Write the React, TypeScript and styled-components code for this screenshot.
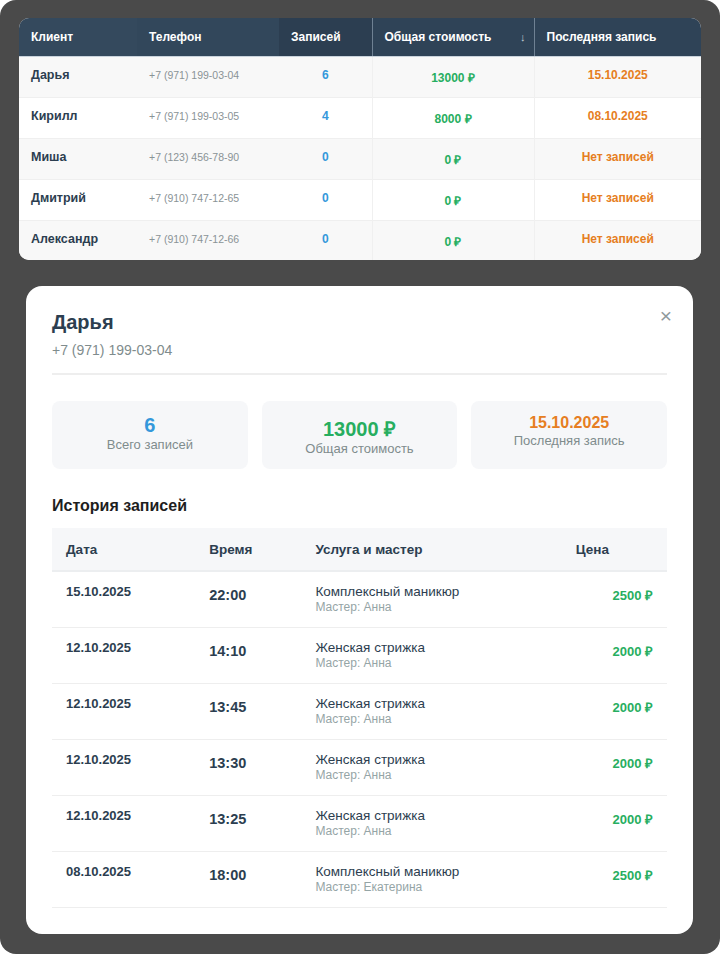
import React from "react";
import styled, { createGlobalStyle } from "styled-components";

const Global = createGlobalStyle`
  html, body { margin: 0; padding: 0; background: #ffffff; }
  body { font-family: "Liberation Sans", Arial, sans-serif; }
  * { box-sizing: border-box; }
`;

const Page = styled.div`
  width: 720px;
  height: 954px;
  background: #4a4a4a;
  border-radius: 16px;
  padding: 18px 19px 20px 19px;
  display: flex;
  flex-direction: column;
  overflow: hidden;
`;

const TableCard = styled.div`
  width: 682px;
  background: #ffffff;
  border-radius: 10px;
  overflow: hidden;
`;

const ClientTable = styled.table`
  width: 100%;
  border-collapse: collapse;
  table-layout: fixed;
`;

const HeadCell = styled.th<{ $bg: string; $w: number; $sep?: boolean }>`
  width: ${(p) => p.$w}px;
  height: 38px;
  padding: 0 12px;
  background: ${(p) => p.$bg};
  color: #ffffff;
  font-size: 12px;
  font-weight: 700;
  text-align: left;
  position: relative;
  border-bottom: 1px solid #c9d3dc;
  ${(p) => (p.$sep ? "border-left: 1px solid #6f8193; border-right: 1px solid #6f8193;" : "")}
`;

const SortArrow = styled.span`
  position: absolute;
  right: 8px;
  top: 50%;
  transform: translateY(-50%);
  font-size: 11px;
  font-weight: 400;
  color: #c5ced6;
`;

const BodyRow = styled.tr<{ $alt: boolean }>`
  background: ${(p) => (p.$alt ? "#f8f8f8" : "#ffffff")};
  border-bottom: 1px solid #efefef;
  &:last-child { border-bottom-color: transparent; }
`;

const Cell = styled.td<{ $align?: string; $pt?: number; $sep?: boolean }>`
  height: 41px;
  padding: ${(p) => p.$pt ?? 10}px 12px 0 12px;
  vertical-align: top;
  text-align: ${(p) => p.$align ?? "left"};
  line-height: 14px;
  ${(p) => (p.$sep ? "border-left: 1px solid #f0f0f0; border-right: 1px solid #f0f0f0;" : "")}
`;

const Name = styled.span`
  font-size: 12.5px;
  font-weight: 700;
  color: #2c3e50;
`;

const Phone = styled.span`
  font-size: 10.5px;
  color: #8a9396;
`;

const Count = styled.span`
  font-size: 12px;
  font-weight: 700;
  color: #3498db;
`;

const Money = styled.span`
  font-size: 12px;
  font-weight: 700;
  color: #27ae60;
`;

const Last = styled.span`
  font-size: 12px;
  font-weight: 700;
  color: #e67e22;
`;

const Modal = styled.div`
  margin: 26px 8px 0 7px;
  width: 667px;
  background: #ffffff;
  border-radius: 16px;
  padding: 24px 26px 26px 26px;
  position: relative;
`;

const CloseBtn = styled.button`
  position: absolute;
  top: 17px;
  right: 14px;
  width: 26px;
  height: 26px;
  border: none;
  background: transparent;
  color: #8f999c;
  font-size: 21px;
  line-height: 26px;
  padding: 0;
  font-family: "Liberation Sans", Arial, sans-serif;
`;

const ModalHeader = styled.div`
  display: flex;
  flex-direction: column;
  padding-bottom: 14px;
  border-bottom: 2px solid #eeeeee;
`;

const Title = styled.h2`
  margin: 0;
  font-size: 20px;
  line-height: 24px;
  font-weight: 700;
  color: #2c3e50;
`;

const SubPhone = styled.div`
  margin-top: 7px;
  font-size: 14px;
  line-height: 18px;
  color: #7f8c8d;
`;

const Stats = styled.div`
  margin-top: 26px;
  display: grid;
  grid-template-columns: repeat(3, 1fr);
  gap: 14px;
`;

const StatCard = styled.div<{ $pt: number }>`
  height: 68px;
  background: #f6f7f9;
  border-radius: 8px;
  padding-top: ${(p) => p.$pt}px;
  display: flex;
  flex-direction: column;
  align-items: center;
`;

const StatValue = styled.div<{ $color: string; $size: number }>`
  font-size: ${(p) => p.$size}px;
  line-height: 1.1;
  font-weight: 700;
  color: ${(p) => p.$color};
`;

const StatLabel = styled.div`
  font-size: 13px;
  line-height: 17px;
  color: #7f8c8d;
`;

const SectionTitle = styled.h3`
  margin: 27px 0 13px 0;
  font-size: 16px;
  line-height: 19px;
  font-weight: 700;
  color: #1e1e1e;
`;

const History = styled.table`
  width: 100%;
  border-collapse: collapse;
  table-layout: fixed;
`;

const HHead = styled.th<{ $w: number }>`
  width: ${(p) => p.$w}px;
  background: #f6f7f9;
  height: 43px;
  padding: 0 14px;
  text-align: left;
  font-size: 13.5px;
  font-weight: 700;
  color: #2c3e50;
  border-bottom: 2px solid #eceef0;
`;

const HRow = styled.tr`
  border-bottom: 1px solid #eeeeee;
`;

const HCell = styled.td<{ $pt?: number; $align?: string }>`
  padding: ${(p) => p.$pt ?? 12}px 14px 12px 14px;
  vertical-align: top;
  height: 55px;
  text-align: ${(p) => p.$align ?? "left"};
`;

const HDate = styled.div`
  font-size: 13px;
  line-height: 16px;
  font-weight: 700;
  color: #2c3e50;
`;

const HTime = styled.div`
  font-size: 14.5px;
  line-height: 18px;
  font-weight: 700;
  color: #2c3e50;
`;

const Service = styled.div`
  font-size: 13.5px;
  line-height: 16px;
  color: #2c3e50;
`;

const Master = styled.div`
  font-size: 12px;
  line-height: 15px;
  color: #95a5a6;
`;

const HPrice = styled.div`
  font-size: 13px;
  line-height: 16px;
  font-weight: 700;
  color: #27ae60;
`;

const clients = [
  { name: "Дарья", phone: "+7 (971) 199-03-04", count: 6, total: "13000 ₽", last: "15.10.2025" },
  { name: "Кирилл", phone: "+7 (971) 199-03-05", count: 4, total: "8000 ₽", last: "08.10.2025" },
  { name: "Миша", phone: "+7 (123) 456-78-90", count: 0, total: "0 ₽", last: "Нет записей" },
  { name: "Дмитрий", phone: "+7 (910) 747-12-65", count: 0, total: "0 ₽", last: "Нет записей" },
  { name: "Александр", phone: "+7 (910) 747-12-66", count: 0, total: "0 ₽", last: "Нет записей" },
];

const history = [
  { date: "15.10.2025", time: "22:00", service: "Комплексный маникюр", master: "Анна", price: "2500 ₽" },
  { date: "12.10.2025", time: "14:10", service: "Женская стрижка", master: "Анна", price: "2000 ₽" },
  { date: "12.10.2025", time: "13:45", service: "Женская стрижка", master: "Анна", price: "2000 ₽" },
  { date: "12.10.2025", time: "13:30", service: "Женская стрижка", master: "Анна", price: "2000 ₽" },
  { date: "12.10.2025", time: "13:25", service: "Женская стрижка", master: "Анна", price: "2000 ₽" },
  { date: "08.10.2025", time: "18:00", service: "Комплексный маникюр", master: "Екатерина", price: "2500 ₽" },
];

export default function App() {
  return (
    <>
      <Global />
      <Page>
        <TableCard>
          <ClientTable>
            <thead>
              <tr>
                <HeadCell $w={118} $bg="#34495d">Клиент</HeadCell>
                <HeadCell $w={142} $bg="#32475b">Телефон</HeadCell>
                <HeadCell $w={93} $bg="#2c3e51">Записей</HeadCell>
                <HeadCell $w={162} $bg="#2f4357" $sep>
                  Общая стоимость<SortArrow>↓</SortArrow>
                </HeadCell>
                <HeadCell $w={167} $bg="#2f4357">Последняя запись</HeadCell>
              </tr>
            </thead>
            <tbody>
              {clients.map((c, i) => (
                <BodyRow key={c.name} $alt={i % 2 === 0}>
                  <Cell><Name>{c.name}</Name></Cell>
                  <Cell><Phone>{c.phone}</Phone></Cell>
                  <Cell $align="center"><Count>{c.count}</Count></Cell>
                  <Cell $align="center" $pt={13} $sep><Money>{c.total}</Money></Cell>
                  <Cell $align="center"><Last>{c.last}</Last></Cell>
                </BodyRow>
              ))}
            </tbody>
          </ClientTable>
        </TableCard>

        <Modal>
          <CloseBtn aria-label="Закрыть">×</CloseBtn>
          <ModalHeader>
            <Title>Дарья</Title>
            <SubPhone>+7 (971) 199-03-04</SubPhone>
          </ModalHeader>

          <Stats>
            <StatCard $pt={13}>
              <StatValue $color="#3498db" $size={20}>6</StatValue>
              <StatLabel>Всего записей</StatLabel>
            </StatCard>
            <StatCard $pt={17}>
              <StatValue $color="#27ae60" $size={20}>13000 ₽</StatValue>
              <StatLabel>Общая стоимость</StatLabel>
            </StatCard>
            <StatCard $pt={13}>
              <StatValue $color="#e67e22" $size={16}>15.10.2025</StatValue>
              <StatLabel>Последняя запись</StatLabel>
            </StatCard>
          </Stats>

          <SectionTitle>История записей</SectionTitle>

          <History>
            <thead>
              <tr>
                <HHead $w={143}>Дата</HHead>
                <HHead $w={106}>Время</HHead>
                <HHead $w={260}>Услуга и мастер</HHead>
                <HHead $w={105}>Цена</HHead>
              </tr>
            </thead>
            <tbody>
              {history.map((h, i) => (
                <HRow key={i}>
                  <HCell><HDate>{h.date}</HDate></HCell>
                  <HCell $pt={14}><HTime>{h.time}</HTime></HCell>
                  <HCell>
                    <Service>{h.service}</Service>
                    <Master>Мастер: {h.master}</Master>
                  </HCell>
                  <HCell $pt={16} $align="right"><HPrice>{h.price}</HPrice></HCell>
                </HRow>
              ))}
            </tbody>
          </History>
        </Modal>
      </Page>
    </>
  );
}
